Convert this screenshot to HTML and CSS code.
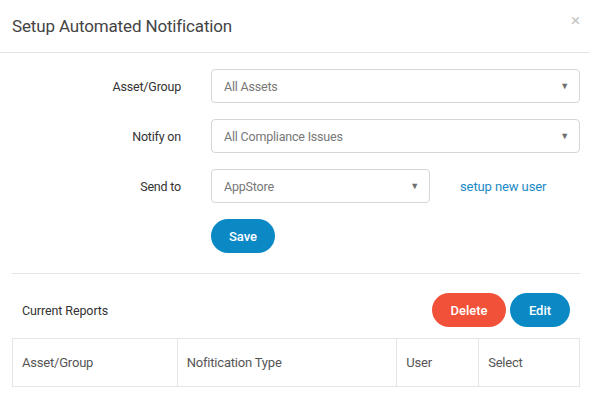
FILE: index.html
```html
<!DOCTYPE html>
<html>
<head>
<meta charset="utf-8">
<link rel="stylesheet" href="styles.css">
</head>
<body>
<div class="modal">
  <div class="modal-header">
    <h1 class="title">Setup Automated Notification</h1>
    <span class="close">×</span>
  </div>
  <div class="form">
    <div class="row">
      <label class="label">Asset/Group</label>
      <div class="select"><span>All Assets</span><span class="caret">▼</span></div>
    </div>
    <div class="row">
      <label class="label">Notify on</label>
      <div class="select"><span>All Compliance Issues</span><span class="caret">▼</span></div>
    </div>
    <div class="row">
      <label class="label">Send to</label>
      <div class="inline">
        <div class="select select-short"><span>AppStore</span><span class="caret">▼</span></div>
        <a class="link">setup new user</a>
      </div>
    </div>
    <div class="row">
      <span></span>
      <div><button class="btn btn-blue btn-save">Save</button></div>
    </div>
  </div>
  <hr class="divider">
  <div class="reports-bar">
    <span class="reports-title">Current Reports</span>
    <div class="actions">
      <button class="btn btn-red btn-delete">Delete</button>
      <button class="btn btn-blue btn-edit">Edit</button>
    </div>
  </div>
  <table class="table">
    <tr>
      <th class="c1">Asset/Group</th>
      <th class="c2">Nofitication Type</th>
      <th class="c3">User</th>
      <th class="c4">Select</th>
    </tr>
  </table>
</div>
</body>
</html>
```
FILE: styles.css
```css
* { box-sizing: border-box; }
body {
  margin: 0;
  background: #fff;
  font-family: Roboto, "Liberation Sans", sans-serif;
  color: #333;
}
.modal { width: 590px; }
.modal-header {
  height: 53px;
  border-bottom: 1px solid #e5e5e5;
  display: flex;
  align-items: center;
  justify-content: space-between;
  padding: 0 10px 0 12px;
}
.title {
  margin: 0;
  font-size: 17px;
  font-weight: 400;
  color: #444;
  letter-spacing: -0.15px;
}
.close {
  color: #c4c4c4;
  font-size: 17px;
  margin-top: -12px;
}
.form {
  padding: 16px 10px 0 12px;
  display: flex;
  flex-direction: column;
  gap: 16px;
}
.row {
  display: grid;
  grid-template-columns: 169px 1fr;
  column-gap: 30px;
  align-items: center;
}
.label {
  text-align: right;
  font-size: 12.5px;
  letter-spacing: -0.2px;
  color: #333;
}
.select {
  height: 34px;
  border: 1px solid #d6d6d6;
  border-radius: 4px;
  display: flex;
  align-items: center;
  justify-content: space-between;
  padding: 0 10px 0 12px;
  font-size: 12.5px;
  letter-spacing: -0.2px;
  color: #777;
}
.caret {
  font-size: 9px;
  color: #6f6f6f;
}
.select-short { width: 219px; }
.inline {
  display: flex;
  align-items: center;
  gap: 30px;
}
.link {
  color: #1a8ac6;
  font-size: 13px;
  letter-spacing: -0.1px;
}
.btn {
  border: none;
  height: 34px;
  border-radius: 17px;
  color: #fff;
  font-family: inherit;
  font-size: 13px;
  font-weight: 500;
  padding: 0;
}
.btn-blue { background: #0a89c5; }
.btn-red { background: #f05138; }
.btn-save { width: 64px; }
.btn-delete { width: 74px; }
.btn-edit { width: 60px; }
.divider {
  margin: 20px 10px 0 12px;
  border: none;
  border-top: 1px solid #e5e5e5;
  height: 0;
}
.reports-bar {
  display: flex;
  align-items: center;
  justify-content: space-between;
  padding: 19px 20px 0 22px;
}
.reports-title {
  font-size: 12.5px;
  letter-spacing: -0.1px;
  color: #333;
}
.actions {
  display: flex;
  gap: 4px;
}
.table {
  margin: 11px 10px 0 12px;
  width: 568px;
  border-collapse: collapse;
}
.table th {
  height: 48px;
  border: 1px solid #e5e5e5;
  text-align: left;
  font-weight: 400;
  font-size: 13px;
  letter-spacing: -0.2px;
  color: #555;
  padding: 0 9px;
}
.c1 { width: 165px; }
.c2 { width: 220px; }
.c3 { width: 82px; }
.c4 { width: 101px; }
```
